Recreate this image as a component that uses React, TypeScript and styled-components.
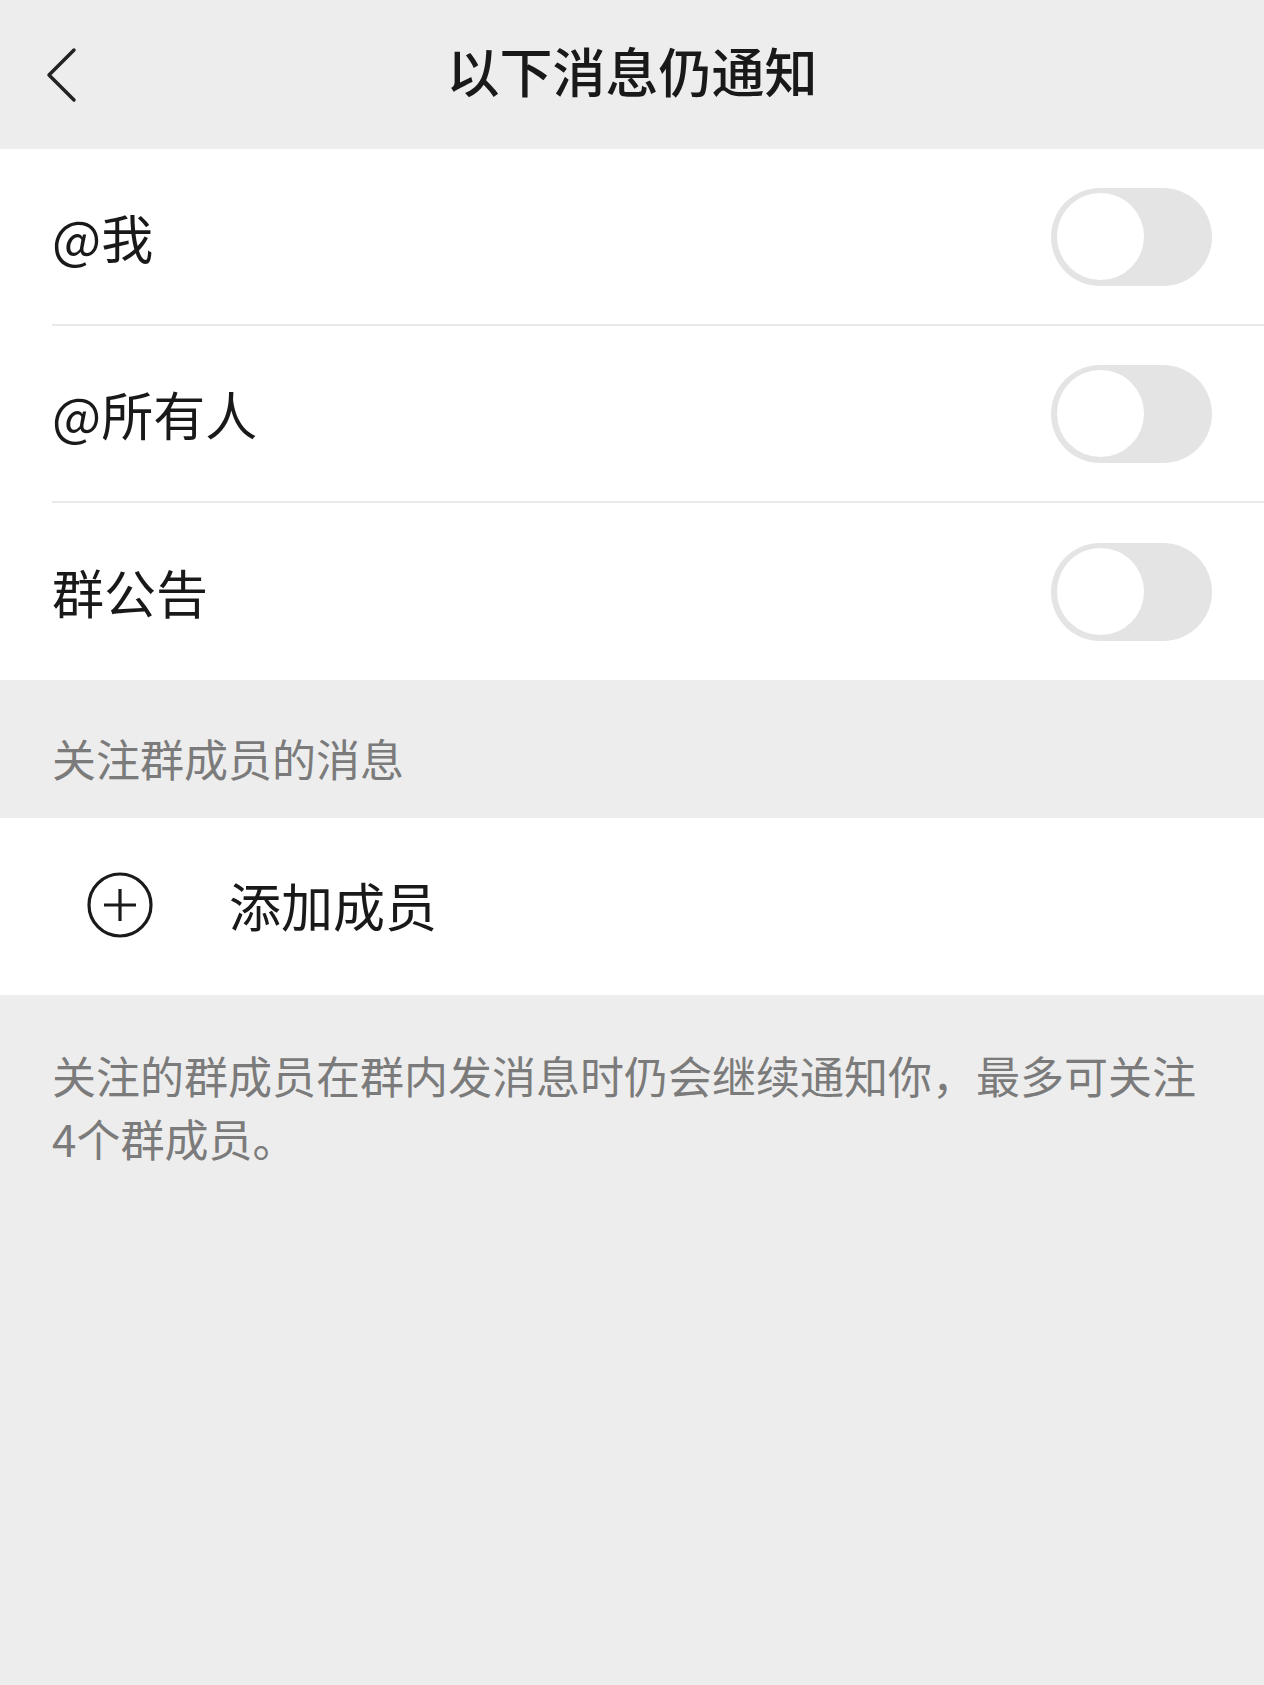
import React from "react";
import styled, { createGlobalStyle } from "styled-components";

const GlobalStyle = createGlobalStyle`
  html, body {
    margin: 0;
    padding: 0;
    background: #ededed;
  }
  body {
    font-family: "Noto Sans CJK SC", "Noto Sans", sans-serif;
    -webkit-font-smoothing: antialiased;
  }
  * { box-sizing: border-box; }
`;

const Page = styled.div`
  width: 1264px;
  min-height: 1685px;
  background: #ededed;
  display: flex;
  flex-direction: column;
`;

const Header = styled.header`
  height: 149px;
  display: grid;
  grid-template-columns: 140px 1fr 140px;
  align-items: center;
  background: #ededed;
`;

const BackButton = styled.button`
  border: 0;
  background: transparent;
  padding: 0 0 0 44px;
  height: 100%;
  display: flex;
  align-items: center;
  cursor: pointer;
`;

const Title = styled.h1`
  margin: 0;
  padding-bottom: 8px;
  text-align: center;
  font-size: 53px;
  font-weight: 500;
  color: #191919;
  line-height: 1;
  letter-spacing: 0;
`;

const Group = styled.section`
  background: #ffffff;
`;

const Row = styled.div<{ $divider?: boolean }>`
  height: 177px;
  margin-left: 52px;
  padding-right: 52px;
  display: flex;
  align-items: center;
  justify-content: space-between;
  border-bottom: ${(p) => (p.$divider ? "2px solid #e9e9e9" : "none")};
`;

const Label = styled.span`
  font-size: 52px;
  color: #191919;
  line-height: 1;
`;

const Track = styled.div`
  width: 161px;
  height: 98px;
  border-radius: 49px;
  background: #e4e4e4;
  padding: 5px 6px;
  display: flex;
  align-items: center;
`;

const Knob = styled.div`
  width: 87px;
  height: 87px;
  border-radius: 50%;
  background: #ffffff;
`;

const SectionTitle = styled.div`
  height: 138px;
  padding: 52px 52px 0;
  font-size: 44px;
  line-height: 52px;
  color: #7b7b7b;
`;

const AddRow = styled.div`
  height: 177px;
  background: #ffffff;
  display: flex;
  align-items: center;
  padding-left: 87px;
  padding-bottom: 3px;
  gap: 76px;
`;

const AddText = styled.span`
  font-size: 52px;
  color: #191919;
  line-height: 1;
`;

const Note = styled.p`
  margin: 0;
  padding: 49px 52px 0;
  font-size: 44px;
  line-height: 63px;
  color: #7b7b7b;
`;

const Switch: React.FC = () => (
  <Track>
    <Knob />
  </Track>
);

const rows = ["@我", "@所有人", "群公告"];

export default function App() {
  return (
    <Page>
      <GlobalStyle />
      <Header>
        <BackButton aria-label="返回">
          <svg width="34" height="56" viewBox="0 0 34 56" fill="none">
            <path d="M30 3 L5 28 L30 53" stroke="#222" strokeWidth="3.5" strokeLinecap="round" strokeLinejoin="round" />
          </svg>
        </BackButton>
        <Title>以下消息仍通知</Title>
        <div />
      </Header>
      <Group>
        {rows.map((r, i) => (
          <Row key={r} $divider={i < rows.length - 1}>
            <Label>{r}</Label>
            <Switch />
          </Row>
        ))}
      </Group>
      <SectionTitle>关注群成员的消息</SectionTitle>
      <AddRow>
        <svg width="66" height="66" viewBox="0 0 66 66" fill="none">
          <circle cx="33" cy="33" r="31" stroke="#1a1a1a" strokeWidth="3.2" />
          <path d="M17 33 H49 M33 17 V49" stroke="#1a1a1a" strokeWidth="3.2" />
        </svg>
        <AddText>添加成员</AddText>
      </AddRow>
      <Note>关注的群成员在群内发消息时仍会继续通知你，最多可关注4个群成员。</Note>
    </Page>
  );
}
